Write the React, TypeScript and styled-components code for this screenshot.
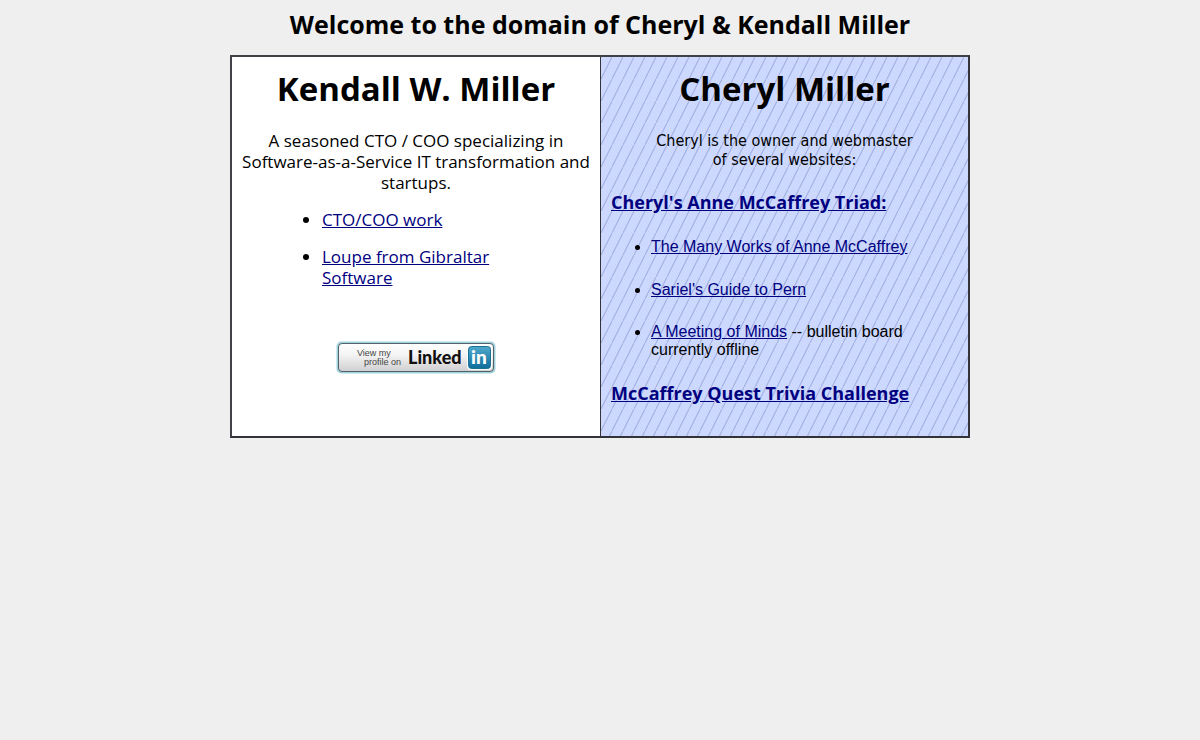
import React from "react";
import styled, { createGlobalStyle } from "styled-components";

const GlobalStyle = createGlobalStyle`
  body {
    margin: 0;
    background: #efefef;
    color: #000;
    font-family: "Open Sans", sans-serif;
  }
`;

const Page = styled.main`
  display: flex;
  flex-direction: column;
  align-items: center;
  padding: 8px;
`;

const Title = styled.h1`
  margin: 0 0 15px;
  font-size: 25px;
  line-height: 32px;
  font-weight: 700;
  text-align: center;
`;

const Columns = styled.div`
  display: grid;
  grid-template-columns: 1fr 1fr;
  box-sizing: border-box;
  width: 100%;
  max-width: 740px;
  border: 2px solid #33343a;
  border-top-color: #404146;
  border-left-color: #404146;
`;

const Person = styled.section<{ $hatched?: boolean }>`
  padding: 10px;
  background-color: ${(p) => (p.$hatched ? "#ccd8fd" : "#fff")};
  ${(p) =>
    p.$hatched &&
    `
    border-left: 1px solid #33343a;
    background-image: linear-gradient(to bottom right, transparent 45%, #9dabde 50%, transparent 55%);
    background-size: 11px 22px;
  `}
`;

const Name = styled.h2`
  margin: 0;
  font-size: 33px;
  line-height: 44px;
  font-weight: 700;
  text-align: center;
`;

const Intro = styled.p<{ $compact?: boolean }>`
  margin: ${(p) => (p.$compact ? "20px 0 16px" : "19px 0 16px")};
  font-family: ${(p) => (p.$compact ? '"DejaVu Sans Condensed"' : '"Open Sans"')}, sans-serif;
  font-size: ${(p) => (p.$compact ? "16px" : "17px")};
  line-height: ${(p) => (p.$compact ? "19px" : "21px")};
  text-align: center;
`;

const Link = styled.a`
  color: #000080;
  text-decoration: underline;
`;

const WorkList = styled.ul`
  width: 188px;
  margin: 0 auto;
  padding-left: 0;
  font-size: 17px;
  line-height: 21px;
`;

const SiteList = styled.ul`
  margin: 24px 0 22px;
  padding: 0 40px;
  font-family: "Liberation Sans", sans-serif;
  font-size: 16px;
  line-height: 18px;
`;

const Item = styled.li<{ $gap: number }>`
  margin-bottom: ${(p) => p.$gap}px;

  &:last-child {
    margin-bottom: 0;
  }
`;

const SiteHeading = styled.h3`
  margin: 21px 0;
  font-size: 18px;
  line-height: 24px;
  font-weight: 700;
`;

const BadgeRow = styled.div`
  display: flex;
  justify-content: center;
  padding: 53px 0 24px;
`;

const BadgeLink = styled.a`
  display: block;
  line-height: 0;
`;

const LinkedInBadge = () => (
  <svg width="160" height="33" viewBox="0 0 160 33" role="img" aria-label="View my profile on LinkedIn">
    <defs>
      <linearGradient id="plate" x1="0" y1="0" x2="0" y2="1">
        <stop offset="0" stopColor="#fff" />
        <stop offset="0.4" stopColor="#f4f4f4" />
        <stop offset="1" stopColor="#cfcfd1" />
      </linearGradient>
      <linearGradient id="tile" x1="0" y1="0" x2="0" y2="1">
        <stop offset="0" stopColor="#4fa9cc" />
        <stop offset="1" stopColor="#0f6d9c" />
      </linearGradient>
    </defs>
    <rect x="0.5" y="0.5" width="159" height="32" rx="5" fill="#9fd3dc" />
    <rect x="2.5" y="2.5" width="155" height="28" rx="3.5" fill="url(#plate)" stroke="#55606a" />
    <rect x="131" y="4" width="25" height="25" rx="4" fill="#fff" />
    <rect x="132.5" y="5.5" width="22" height="22" rx="3" fill="url(#tile)" stroke="#1d6f94" />
    <text x="21" y="15" fontFamily="Liberation Sans, sans-serif" fontSize="9" fill="#444">View my</text>
    <text x="28" y="24" fontFamily="Liberation Sans, sans-serif" fontSize="9" fill="#444">profile on</text>
    <text x="72" y="23" fontFamily="Lato, sans-serif" fontWeight="900" fontSize="18" fill="#111">Linked</text>
    <text x="135" y="23" fontFamily="Lato, sans-serif" fontWeight="900" fontSize="19" fill="#fff">in</text>
  </svg>
);

export default function App() {
  return (
    <>
      <GlobalStyle />
      <Page>
        <Title>Welcome to the domain of Cheryl &amp; Kendall Miller</Title>
        <Columns>
          <Person>
            <Name>Kendall W. Miller</Name>
            <Intro>
              A seasoned CTO / COO specializing in Software-as-a-Service IT transformation and startups.
            </Intro>
            <WorkList>
              <Item $gap={16}>
                <Link href="#work">CTO/COO work</Link>
              </Item>
              <Item $gap={16}>
                <Link href="#loupe">Loupe from Gibraltar Software</Link>
              </Item>
            </WorkList>
            <BadgeRow>
              <BadgeLink href="#linkedin">
                <LinkedInBadge />
              </BadgeLink>
            </BadgeRow>
          </Person>
          <Person $hatched>
            <Name>Cheryl Miller</Name>
            <Intro $compact>
              Cheryl is the owner and webmaster
              <br />
              of several websites:
            </Intro>
            <SiteHeading>
              <Link href="#triad">Cheryl's Anne McCaffrey Triad:</Link>
            </SiteHeading>
            <SiteList>
              <Item $gap={25}>
                <Link href="#works">The Many Works of Anne McCaffrey</Link>
              </Item>
              <Item $gap={24}>
                <Link href="#pern">Sariel's Guide to Pern</Link>
              </Item>
              <Item $gap={24}>
                <Link href="#minds">A Meeting of Minds</Link> -- bulletin board currently offline
              </Item>
            </SiteList>
            <SiteHeading>
              <Link href="#trivia">McCaffrey Quest Trivia Challenge</Link>
            </SiteHeading>
          </Person>
        </Columns>
      </Page>
    </>
  );
}
